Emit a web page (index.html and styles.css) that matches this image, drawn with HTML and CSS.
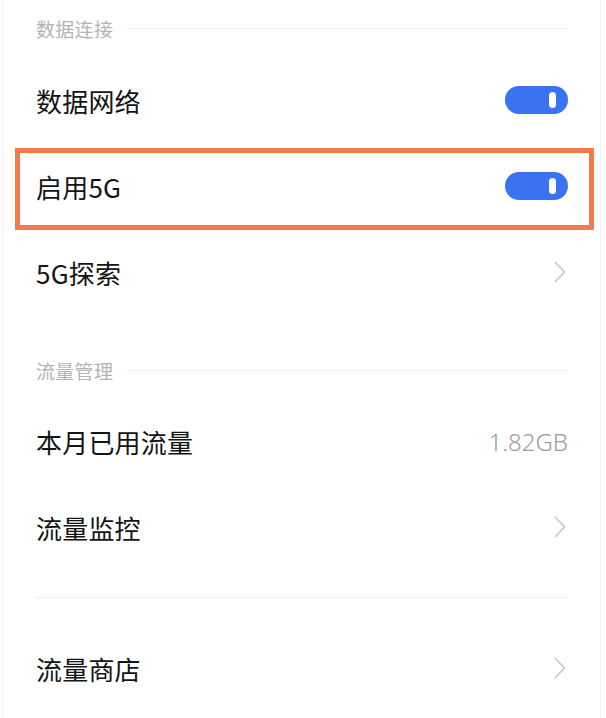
FILE: index.html
```html
<!DOCTYPE html>
<html lang="zh-CN">
<head>
<meta charset="utf-8">
<title>移动网络</title>
<link rel="stylesheet" href="styles.css">
</head>
<body>
<div class="page">
  <div class="section-header first"><span>数据连接</span><i class="rule"></i></div>
  <div class="row"><span class="label">数据网络</span><span class="toggle"><span class="knob"></span></span></div>
  <div class="row highlighted"><span class="label">启用5G</span><span class="toggle"><span class="knob"></span></span></div>
  <div class="row"><span class="label">5G探索</span>
    <svg class="chev" width="12" height="22" viewBox="0 0 12 22"><polyline points="1.5,1.5 10.5,11 1.5,20.5" fill="none" stroke="#c6c6c6" stroke-width="1.6" stroke-linecap="round" stroke-linejoin="round"/></svg>
  </div>
  <div class="section-header second"><span>流量管理</span><i class="rule"></i></div>
  <div class="row"><span class="label">本月已用流量</span><span class="value">1.82GB</span></div>
  <div class="row"><span class="label">流量监控</span>
    <svg class="chev" width="12" height="22" viewBox="0 0 12 22"><polyline points="1.5,1.5 10.5,11 1.5,20.5" fill="none" stroke="#c6c6c6" stroke-width="1.6" stroke-linecap="round" stroke-linejoin="round"/></svg>
  </div>
  <div class="divider"></div>
  <div class="row"><span class="label">流量商店</span>
    <svg class="chev" width="12" height="22" viewBox="0 0 12 22"><polyline points="1.5,1.5 10.5,11 1.5,20.5" fill="none" stroke="#c6c6c6" stroke-width="1.6" stroke-linecap="round" stroke-linejoin="round"/></svg>
  </div>
</div>
</body>
</html>
```
FILE: styles.css
```css
html, body {
  margin: 0;
  padding: 0;
  background: #ffffff;
}
body {
  font-family: "Noto Sans CJK SC", "Noto Sans", sans-serif;
  color: #141414;
  overflow: hidden;
}
.page {
  margin-left: 2px;
  width: 599px;
  height: 718px;
  border-left: 1px solid #f3f3f3;
  border-right: 1px solid #f3f3f3;
  padding: 0 32px 0 33px;
  box-sizing: border-box;
}
.section-header {
  display: flex;
  align-items: center;
  height: 56px;
  font-size: 19px;
  color: #b3b3b3;
  letter-spacing: 0.3px;
}
.section-header.first {
  height: 57px;
}
.section-header.second {
  margin-top: 27px;
}
.section-header .rule {
  flex: 1;
  height: 1px;
  background: #f2f2f2;
  margin-left: 14px;
}
.row {
  display: flex;
  align-items: center;
  justify-content: space-between;
  height: 86px;
  position: relative;
}
.label {
  font-size: 26px;
  letter-spacing: 0.2px;
}
.highlighted::after {
  content: "";
  position: absolute;
  left: -21px;
  right: -26px;
  top: 5px;
  bottom: -1px;
  border: 5px solid #f27a4b;
  pointer-events: none;
}
.toggle {
  display: flex;
  align-items: center;
  justify-content: flex-end;
  width: 63px;
  height: 28px;
  border-radius: 14px;
  background: #3a73f2;
  padding-right: 12px;
  box-sizing: border-box;
}
.knob {
  width: 7px;
  height: 16px;
  border-radius: 4px;
  background: #ffffff;
}
.value {
  font-family: "Noto Sans", "Open Sans", sans-serif;
  font-size: 24px;
  font-weight: 300;
  color: #9c9c9c;
}
.chev {
  margin-right: 2px;
  display: block;
}
.divider {
  height: 1px;
  background: #f2f2f2;
  margin-top: 27px;
  margin-bottom: 27px;
}
```
